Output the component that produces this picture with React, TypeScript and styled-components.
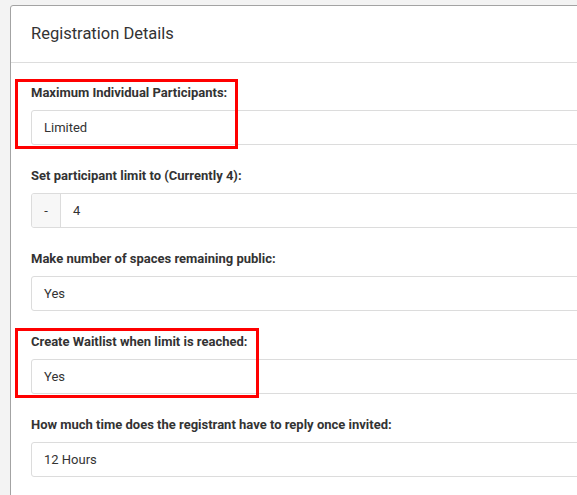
import React from 'react';
import styled, { createGlobalStyle } from 'styled-components';

const GlobalStyle = createGlobalStyle`
  html, body {
    margin: 0;
    padding: 0;
    background: #f3f3f3;
    overflow: hidden;
  }
  body {
    font-family: Roboto, "Liberation Sans", Arial, sans-serif;
    color: #333;
  }
`;

interface Field {
  label: string;
  value: string;
  addon?: string;
  highlight?: number;
}

const fields: Field[] = [
  { label: 'Maximum Individual Participants:', value: 'Limited', highlight: 223 },
  { label: 'Set participant limit to (Currently 4):', value: '4', addon: '-' },
  { label: 'Make number of spaces remaining public:', value: 'Yes' },
  { label: 'Create Waitlist when limit is reached:', value: 'Yes', highlight: 244 },
  { label: 'How much time does the registrant have to reply once invited:', value: '12 Hours' },
];

const App: React.FC = () => {
  return (
    <Page>
      <GlobalStyle />
      <Panel>
        <Header>Registration Details</Header>
        <Body>
          {fields.map((f) => (
            <Group key={f.label}>
              {f.highlight && <Highlight $width={f.highlight} />}
              <Label>{f.label}</Label>
              <InputBox>
                {f.addon && <Addon>{f.addon}</Addon>}
                <Value>{f.value}</Value>
              </InputBox>
            </Group>
          ))}
        </Body>
      </Panel>
    </Page>
  );
};

export default App;

const Page = styled.div`
  box-sizing: border-box;
  padding: 5px 0 0 10px;
  width: 100vw;
  height: 100vh;
  overflow: hidden;
`;

const Panel = styled.div`
  background: #fff;
  border: 1px solid #a3a3a3;
  border-radius: 3px;
  width: calc(100% + 40px);
  min-height: calc(100% + 20px);
`;

const Header = styled.div`
  padding: 18px 20px;
  font-size: 16.5px;
  line-height: 20px;
  color: #333;
  border-bottom: 1px solid #dddddd;
`;

const Body = styled.div`
  padding: 21px 20px 0 20px;
`;

const Group = styled.div`
  position: relative;
  margin-bottom: 22px;
`;

const Highlight = styled.div<{ $width: number }>`
  position: absolute;
  left: -16px;
  top: -5px;
  width: ${(p) => p.$width}px;
  height: 70px;
  box-sizing: border-box;
  border: 3px solid #ff0000;
  pointer-events: none;
`;

const Label = styled.div`
  font-size: 13px;
  font-weight: 700;
  line-height: 18px;
  margin-bottom: 8px;
  color: #333;
  white-space: nowrap;
`;

const InputBox = styled.div`
  display: flex;
  height: 35px;
  box-sizing: border-box;
  border: 1px solid #dcdcdc;
  border-radius: 3px;
  overflow: hidden;
`;

const Addon = styled.div`
  width: 28px;
  display: flex;
  align-items: center;
  justify-content: center;
  background: #f7f7f7;
  border-right: 1px solid #dcdcdc;
  font-size: 13px;
  color: #333;
`;

const Value = styled.div`
  flex: 1;
  display: flex;
  align-items: center;
  padding-left: 12px;
  font-size: 13px;
  color: #333;
`;
